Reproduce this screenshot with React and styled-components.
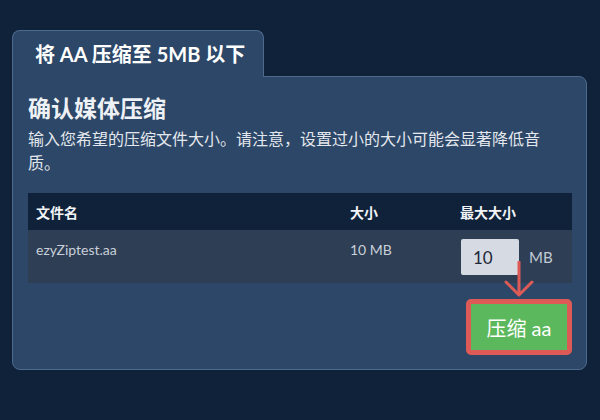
import styled, { createGlobalStyle } from "styled-components";

const GlobalStyle = createGlobalStyle`
  body {
    margin: 0;
    background: #10223a;
    font-family: Lato, "Noto Sans CJK SC", sans-serif;
  }
`;

export default function App() {
  return (
    <>
      <GlobalStyle />
      <Page>
        <Tab>将 AA 压缩至 5MB 以下</Tab>
        <Panel>
          <Title>确认媒体压缩</Title>
          <Description>
            输入您希望的压缩文件大小。请注意，设置过小的大小可能会显著降低音质。
          </Description>
          <Table>
            <HeadRow>
              <HeadCell>文件名</HeadCell>
              <HeadCell>大小</HeadCell>
              <HeadCell>最大大小</HeadCell>
            </HeadRow>
            <BodyRow>
              <Cell>ezyZiptest.aa</Cell>
              <Cell>10 MB</Cell>
              <SizeCell>
                <SizeInput type="text" defaultValue="10" />
                <Unit>MB</Unit>
              </SizeCell>
            </BodyRow>
          </Table>
          <Actions>
            <ButtonWrap>
              <Arrow width="30" height="36" viewBox="0 0 30 36">
                <path
                  d="M15 1 V33 M2 21 L15 34 L28 21"
                  fill="none"
                  stroke="#de5a57"
                  strokeWidth="3"
                  strokeLinecap="round"
                  strokeLinejoin="round"
                />
              </Arrow>
              <CompressButton>压缩 aa</CompressButton>
            </ButtonWrap>
          </Actions>
        </Panel>
      </Page>
    </>
  );
}

const Page = styled.div`
  padding: 30px 13px 0 12px;
  display: flex;
  flex-direction: column;
  align-items: flex-start;
`;

const Tab = styled.div`
  position: relative;
  z-index: 1;
  box-sizing: border-box;
  width: 252px;
  height: 47px;
  margin-bottom: -1px;
  padding: 0 0 0 22px;
  background: #2c4767;
  border: 1px solid #4c6a8e;
  border-bottom: none;
  border-radius: 8px 8px 0 0;
  color: #ffffff;
  font-size: 20px;
  font-weight: 700;
  line-height: 46px;
  white-space: nowrap;
`;

const Panel = styled.div`
  box-sizing: border-box;
  width: 575px;
  padding: 0 14px 14px 15px;
  background: #2c4767;
  border: 1px solid #4c6a8e;
  border-radius: 0 8px 8px 8px;
`;

const Title = styled.h2`
  margin: 15px 0 0;
  color: #eef1f5;
  font-size: 23px;
  font-weight: 700;
  line-height: 32px;
`;

const Description = styled.p`
  margin: 3px 0 0;
  padding-right: 10px;
  color: #e4e8ee;
  font-size: 16px;
  line-height: 24px;
`;

const Table = styled.div`
  margin-top: 18px;
  width: 100%;
`;

const HeadRow = styled.div`
  display: grid;
  grid-template-columns: 314px 110px 1fr;
  height: 37px;
  align-items: center;
  background: #10223a;
`;

const HeadCell = styled.div`
  padding-left: 8px;
  color: #f2f4f7;
  font-size: 14px;
  font-weight: 700;
`;

const BodyRow = styled.div`
  display: grid;
  grid-template-columns: 314px 110px 1fr;
  align-items: start;
  padding: 9px 0 8px;
  background: #2e3e54;
`;

const Cell = styled.div`
  padding: 1px 0 0 8px;
  color: #c9d0da;
  font-size: 14px;
  line-height: 20px;
`;

const SizeCell = styled.div`
  display: flex;
  align-items: center;
  padding-left: 9px;
`;

const SizeInput = styled.input`
  box-sizing: border-box;
  width: 58px;
  height: 36px;
  padding: 0 0 0 12px;
  border: none;
  border-radius: 2px;
  background: #d5dae3;
  color: #1d2838;
  font-family: Lato, sans-serif;
  font-size: 17px;
  outline: none;
`;

const Unit = styled.span`
  margin-left: 10px;
  color: #c3cad4;
  font-size: 15px;
`;

const Actions = styled.div`
  display: flex;
  justify-content: flex-end;
  margin-top: 16px;
`;

const ButtonWrap = styled.div`
  position: relative;
`;

const Arrow = styled.svg`
  position: absolute;
  left: 38px;
  top: -38px;
`;

const CompressButton = styled.button`
  box-sizing: border-box;
  width: 106px;
  height: 56px;
  border: 5px solid #de5a57;
  border-radius: 5px;
  background: #5cb85c;
  color: #ffffff;
  font-family: Lato, "Noto Sans CJK SC", sans-serif;
  font-size: 20px;
  cursor: pointer;
`;
